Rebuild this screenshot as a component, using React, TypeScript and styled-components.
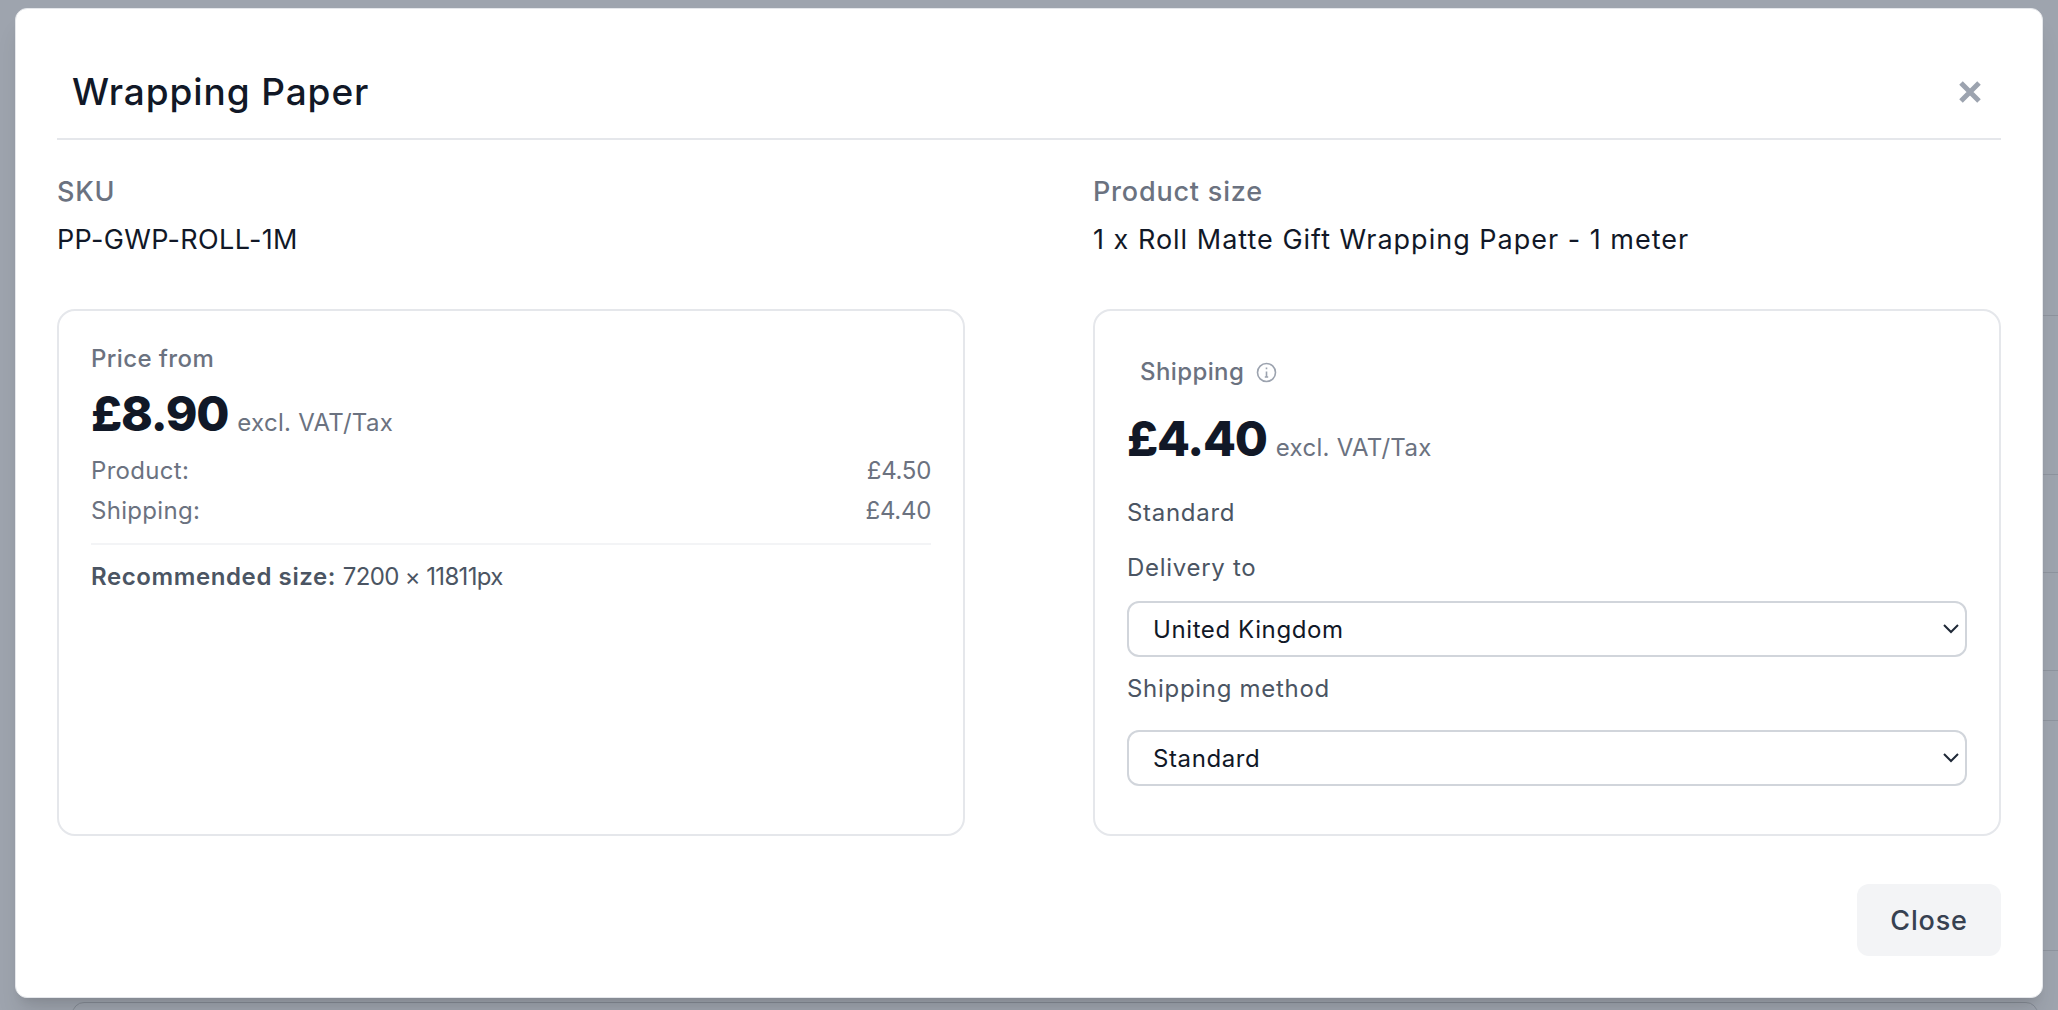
import * as React from "react"
import styled, { createGlobalStyle } from "styled-components"

const GlobalStyle = createGlobalStyle`
  * {
    box-sizing: border-box;
  }
  html, body {
    margin: 0;
    height: 100%;
    overflow: hidden;
  }
  body {
    font-family: "Inter", "Liberation Sans", sans-serif;
  }
`

const Backdrop = styled.div`
  position: relative;
  width: 2058px;
  height: 1010px;
  background: #9ea4ae;
  padding: 8px 15px 12px 15px;
`

// the page behind the dialog, only its edges show
const BehindRows = styled.div`
  position: absolute;
  top: 0;
  right: 0;
  width: 60px;
  display: flex;
  flex-direction: column;
`

const BehindRow = styled.div<{ $h: number }>`
  height: ${(p) => p.$h}px;
  border-bottom: 1px solid #8e949e;
`

const BehindCard = styled.div`
  position: absolute;
  left: 72px;
  right: 20px;
  top: 1002px;
  height: 40px;
  border: 1px solid #858b95;
  border-radius: 12px;
`

const Modal = styled.div`
  position: relative;
  height: 990px;
  background: #fff;
  border-radius: 12px;
  border: 1px solid #e5e7eb;
  box-shadow: 0 20px 25px -5px rgba(0, 0, 0, 0.1), 0 8px 10px -6px rgba(0, 0, 0, 0.1);
  padding: 0 41px;
  display: flex;
  flex-direction: column;
`

const Header = styled.div`
  height: 131px;
  padding: 36px 19px 0 15px;
  border-bottom: 2px solid #e5e7eb;
  display: flex;
  align-items: center;
  justify-content: space-between;
`

const Title = styled.h2`
  margin: 0;
  font-size: 37px;
  font-weight: 500;
  letter-spacing: 0.9px;
  color: #111827;
`

const CloseIcon = styled.button`
  border: 0;
  background: none;
  padding: 0;
  display: flex;
  color: #9ca3af;
`

const Columns = styled.div`
  display: grid;
  grid-template-columns: 908px 908px;
  justify-content: space-between;
`

const Meta = styled.div`
  padding-top: 34px;
  height: 169px;
`

const MetaLabel = styled.div`
  font-size: 27px;
  line-height: 36px;
  font-weight: 500;
  letter-spacing: 0.8px;
  color: #6b7280;
`

const MetaValue = styled.div<{ $spacing: number }>`
  margin-top: 12px;
  font-size: 27px;
  line-height: 36px;
  letter-spacing: ${(p) => p.$spacing}px;
  color: #111827;
`

const Card = styled.div`
  height: 527px;
  border: 2px solid #e5e7eb;
  border-radius: 18px;
  padding: 30px 32px;
`

const CardLabel = styled.div`
  display: flex;
  align-items: center;
  gap: 12px;
  font-size: 24px;
  line-height: 36px;
  font-weight: 500;
  letter-spacing: 0.4px;
  color: #6b7280;
`

const ShippingLabel = styled(CardLabel)`
  padding: 13px 0 0 13px;
`

const PriceRow = styled.div<{ $gap: number }>`
  display: flex;
  align-items: baseline;
  gap: 9px;
  margin-top: ${(p) => p.$gap}px;
`

const Price = styled.span`
  font-size: 48px;
  line-height: 60px;
  font-weight: 800;
  letter-spacing: -1.2px;
  color: #111827;
`

const PriceNote = styled.span`
  font-size: 24px;
  letter-spacing: 0.3px;
  color: #6b7280;
`

const Breakdown = styled.div`
  margin-top: 7px;
`

const BreakdownRow = styled.div`
  display: flex;
  justify-content: space-between;
  font-size: 24px;
  line-height: 40px;
  letter-spacing: 0.3px;
  color: #6b7280;
`

const Amount = styled.span`
  letter-spacing: -0.3px;
`

const Rule = styled.div`
  height: 2px;
  margin: 12px 0 14px;
  background: #f3f4f6;
`

const Recommended = styled.div`
  font-size: 24px;
  line-height: 36px;
  color: #4b5563;

  b {
    font-weight: 600;
    letter-spacing: 0.6px;
  }

  span {
    letter-spacing: -0.65px;
  }
`

const FieldText = styled.div<{ $top: number }>`
  margin-top: ${(p) => p.$top}px;
  font-size: 24px;
  line-height: 36px;
  letter-spacing: 0.7px;
  color: #4b5563;
`

const Select = styled.div<{ $top: number }>`
  margin-top: ${(p) => p.$top}px;
  height: 56px;
  border: 2px solid #d1d5db;
  border-radius: 12px;
  padding: 0 6px 0 24px;
  display: flex;
  align-items: center;
  justify-content: space-between;
  font-size: 24px;
  letter-spacing: 0.6px;
  color: #111827;
`

const Footer = styled.div`
  display: flex;
  justify-content: flex-end;
  padding-top: 48px;
`

const CloseButton = styled.button`
  width: 144px;
  height: 72px;
  border: 0;
  border-radius: 12px;
  background: #f3f4f6;
  font-family: inherit;
  font-size: 27px;
  font-weight: 500;
  letter-spacing: 0.8px;
  color: #374151;
`

const behindRowHeights = [316, 159, 98, 98, 50, 230]

const Chevron: React.FC = () => (
  <svg width="16" height="10" viewBox="0 0 16 10" fill="none" stroke="#1f2937" strokeWidth="2">
    <path d="M1 1l7 7 7-7" />
  </svg>
)

const App: React.FC = () => (
  <Backdrop>
    <GlobalStyle />
    <BehindRows>
      {behindRowHeights.map((h, i) => (
        <BehindRow key={i} $h={h} />
      ))}
    </BehindRows>
    <BehindCard />
    <Modal>
      <Header>
        <Title>Wrapping Paper</Title>
        <CloseIcon aria-label="Close dialog">
          <svg width="24" height="24" viewBox="0 0 24 24" fill="none" stroke="currentColor" strokeWidth="5">
            <path d="M3 3l18 18M21 3L3 21" />
          </svg>
        </CloseIcon>
      </Header>
      <Columns>
        <Meta>
          <MetaLabel>SKU</MetaLabel>
          <MetaValue $spacing={0.35}>PP-GWP-ROLL-1M</MetaValue>
        </Meta>
        <Meta>
          <MetaLabel>Product size</MetaLabel>
          <MetaValue $spacing={1}>1 x Roll Matte Gift Wrapping Paper - 1 meter</MetaValue>
        </Meta>
        <Card>
          <CardLabel>Price from</CardLabel>
          <PriceRow $gap={7}>
            <Price>£8.90</Price>
            <PriceNote>excl. VAT/Tax</PriceNote>
          </PriceRow>
          <Breakdown>
            <BreakdownRow>
              <span>Product:</span>
              <Amount>£4.50</Amount>
            </BreakdownRow>
            <BreakdownRow>
              <span>Shipping:</span>
              <Amount>£4.40</Amount>
            </BreakdownRow>
          </Breakdown>
          <Rule />
          <Recommended>
            <b>Recommended size:</b> <span>7200 × 11811px</span>
          </Recommended>
        </Card>
        <Card>
          <ShippingLabel>
            Shipping
            <svg width="21" height="21" viewBox="0 0 21 21" fill="none" stroke="#9ca3af" strokeWidth="1.6">
              <circle cx="10.5" cy="10.5" r="9" />
              <path d="M10.5 9.5v5.5M8.8 15h3.4M10.5 5.6v1.6" />
            </svg>
          </ShippingLabel>
          <PriceRow $gap={19}>
            <Price>£4.40</Price>
            <PriceNote>excl. VAT/Tax</PriceNote>
          </PriceRow>
          <FieldText $top={26}>Standard</FieldText>
          <FieldText $top={19}>Delivery to</FieldText>
          <Select $top={15}>
            United Kingdom
            <Chevron />
          </Select>
          <FieldText $top={14}>Shipping method</FieldText>
          <Select $top={23}>
            Standard
            <Chevron />
          </Select>
        </Card>
      </Columns>
      <Footer>
        <CloseButton>Close</CloseButton>
      </Footer>
    </Modal>
  </Backdrop>
)

export default App
